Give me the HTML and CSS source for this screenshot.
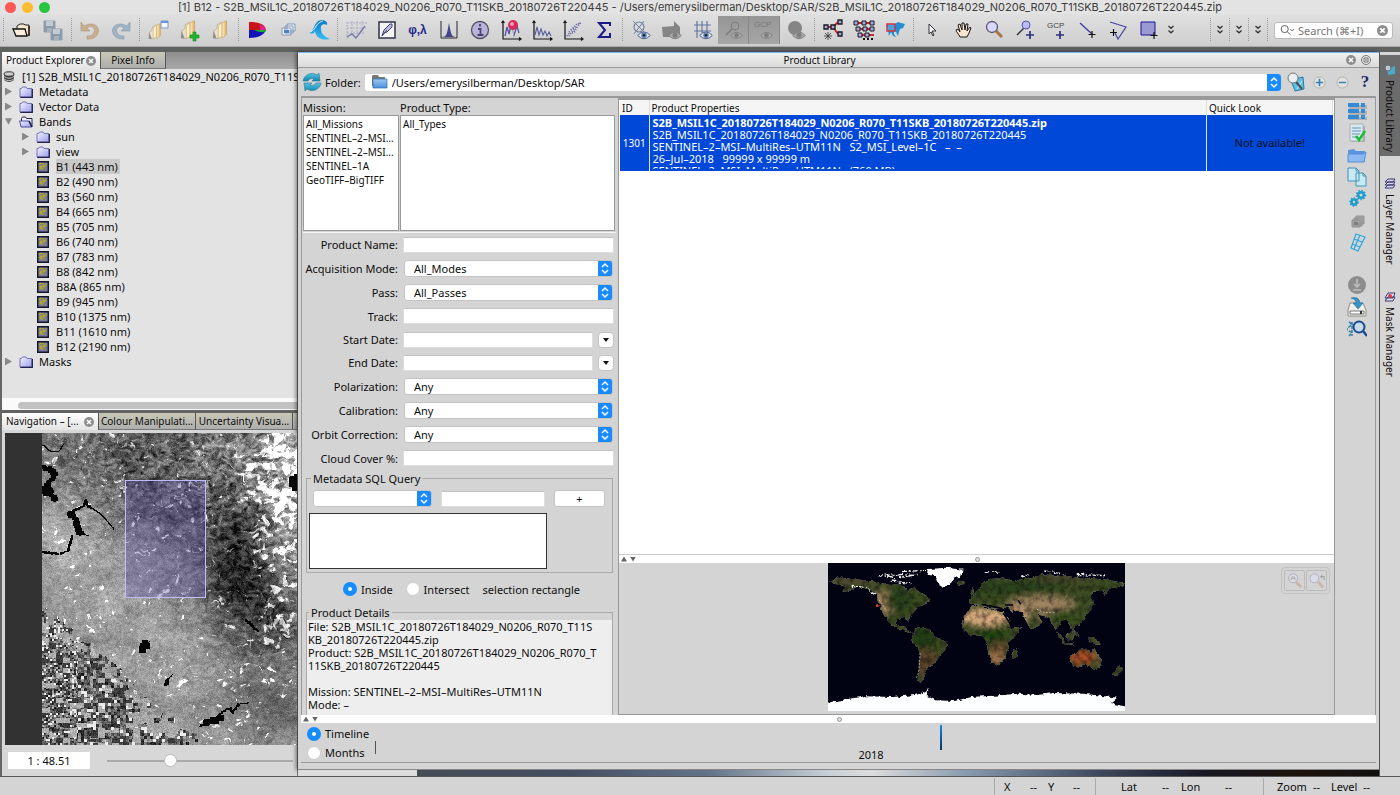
FILE: index.html
```html
<!DOCTYPE html>
<html lang="en">
<head>
<meta charset="utf-8">
<title>[1] B12 - S2B_MSIL1C_20180726T184029_N0206_R070_T11SKB_20180726T220445</title>
<link rel="stylesheet" href="styles.css">
</head>
<body>
<svg class="sprite" aria-hidden="true">
  <defs>
    <linearGradient id="g-folder" x1="0" y1="0" x2="1" y2="1"><stop offset="0" stop-color="#f4f4ff"/><stop offset="1" stop-color="#9c9ce8"/></linearGradient>
    <linearGradient id="g-manila" x1="0" y1="0" x2="1" y2="0"><stop offset="0" stop-color="#fff3d0"/><stop offset="1" stop-color="#dba95a"/></linearGradient>
    <linearGradient id="g-wave" x1="0" y1="0" x2="0" y2="1"><stop offset="0" stop-color="#0a78c8"/><stop offset="1" stop-color="#35bdf5"/></linearGradient>
    <linearGradient id="g-teal" x1="0" y1="0" x2="0" y2="1"><stop offset="0" stop-color="#54c4e4"/><stop offset="1" stop-color="#1487b0"/></linearGradient>
    <linearGradient id="g-blue" x1="0" y1="0" x2="0" y2="1"><stop offset="0" stop-color="#9cc9f5"/><stop offset="1" stop-color="#4a8ed8"/></linearGradient>
  </defs>
  <symbol id="folder" viewBox="0 0 14 12"><path d="M1 2.500h1.500l1-1.500h3.500l1 1.500h5v8.500h-12z" fill="url(#g-folder)" stroke="#7474b8"/><path d="M13.300 3v8.300h-12" fill="none" stroke="#22224c" stroke-width="1.300"/></symbol>
  <symbol id="folder-open" viewBox="0 0 14 12"><path d="M2.500 9v-6.500l1-1.500h3l1 1.500h5.500v8z" fill="#e9e9ff" stroke="#22224c"/><path d="M.6 5h9.500l2.600 6h-10.600z" fill="url(#g-folder)" stroke="#4d4d9a"/><path d="M10 5l3 6" stroke="#1a1a44" stroke-width="1.500"/></symbol>
  <symbol id="band" viewBox="0 0 12 12"><path d="M.7.7h10.600v10.600h-10.600z" fill="#77779e" stroke="#15152a" stroke-width="1.400"/><path d="M2 4l1-2 3 1 1-1M3 5h2v3H3zM6 4h2v2H6zM9 2v3M5 9l2-2M8 8l1 1" fill="#bcb428" stroke="#aaa42c"/></symbol>
  <symbol id="eye" viewBox="0 0 14 9"><path d="M.7 4.500Q7-2.500 13.300 4.500 7 11 .7 4.500z" fill="#e8edf6" stroke="#49618b"/><circle cx="7" cy="4.300" r="2.800" fill="#6785b2"/><circle cx="7" cy="4.300" r="1.300" fill="#16243f"/></symbol>
  <symbol id="eye-off" viewBox="0 0 14 9"><path d="M.7 4.500Q7-2.500 13.300 4.500 7 11 .7 4.500z" fill="#a9a9a9" stroke="#808080"/><circle cx="7" cy="4.300" r="2.500" fill="#7e7e7e"/></symbol>
  <symbol id="close" viewBox="0 0 10 10"><circle cx="5" cy="5" r="5" fill="#8d8d8d"/><path d="M3 3l4 4M7 3l-4 4" stroke="#fff" stroke-width="1.500"/></symbol>
  <symbol id="chev" viewBox="0 0 8 10"><path d="M1.500 1l2.500 2.300L6.500 1M1.500 5.500L4 7.800l2.500-2.300" fill="none" stroke="#333" stroke-width="1.300"/></symbol>
  <symbol id="folders" viewBox="0 0 24 24"><path d="M3 21v-8l3-2 1-5 4-2 2 1v13l-5 3z" fill="#e9dfca" stroke="#a2967e" stroke-width=".6"/><path d="M8 7l4-3v15l-4 2z" fill="#fff0c9" stroke="#c2a268" stroke-width=".6"/><path d="M12 4l5-2v15l-5 4z" fill="url(#g-manila)" stroke="#c6a15c" stroke-width=".7"/><path d="M2 21l1-8 3 8z" fill="#8d8d8d"/></symbol>
  <symbol id="axes" viewBox="0 0 24 24"><path d="M4 3v18h18M2.500 5L4 3l1.500 2M20 19.500l2 1.500-2 1.500" fill="none" stroke="#151515" stroke-width="1.200"/></symbol>
</svg>

<header class="titlebar">
  <span class="lights"><i class="red"></i><i class="yellow"></i><i class="green"></i></span>
  <span class="title">[1] B12 - S2B_MSIL1C_20180726T184029_N0206_R070_T11SKB_20180726T220445 - /Users/emerysilberman/Desktop/SAR/S2B_MSIL1C_20180726T184029_N0206_R070_T11SKB_20180726T220445.zip</span>
</header>

<nav class="toolbar" aria-label="Main toolbar">
  <i class="sep"></i>
  <button class="tool" aria-label="Open product"><svg viewBox="0 0 24 24"><path d="M7 17V8l3-2h4l1 1h4v10z" fill="#f6e6cf" stroke="#222"/><path d="M3 11h12l2 7H6z" fill="#fbeedb" stroke="#111" stroke-width="1.300"/><path d="M19 8v10" stroke="#3b2410" stroke-width="1.600"/></svg></button>
  <button class="tool" aria-label="Save"><svg viewBox="0 0 24 24"><g fill="#899aa9" stroke="#8fa0ae"><path d="M3 3h11v11H3zM10 11h11v11H10z"/></g><path d="M5 3h7v5H5zM12 11h7v5h-7z" fill="#c3cad0"/><path d="M6 10h5v4H6zM13 18h5v4h-5z" fill="#a9b2ba"/></svg></button>
  <i class="sep"></i>
  <button class="tool" aria-label="Undo"><svg viewBox="0 0 24 24"><path d="M3 4v9h9l-3-3c5-4 10 1 6 6-1 2-4 2-6 2v3c14 1 15-15 4-15-3 0-5 1-7 2z" fill="#c9ad8e" stroke="#ad967d" stroke-width=".6"/></svg></button>
  <button class="tool" aria-label="Redo"><svg viewBox="0 0 24 24"><path d="M21 4v9h-9l3-3c-5-4-10 1-6 6 1 2 4 2 6 2v3C1 22 0 6 11 6c3 0 5 1 7 2z" fill="#9eb4c3" stroke="#8399a8" stroke-width=".6"/></svg></button>
  <i class="sep"></i>
  <button class="tool" aria-label="Open workspace"><svg viewBox="0 0 24 24"><use href="#folders" x="1" y="4" width="19" height="19"/><path d="M15 3h7v7h-7z" fill="#f5f8fd" stroke="#7b9ac8"/><path d="M15 4h7" stroke="#6794d7" stroke-width="2"/></svg></button>
  <button class="tool" aria-label="Add product"><svg viewBox="0 0 24 24"><use href="#folders" x="2" y="1" width="22" height="22"/><path d="M16 14h3v3h3v3h-3v3h-3v-3h-3v-3h3z" fill="#20b52c" stroke="#118b1c" stroke-width=".6"/></svg></button>
  <button class="tool" aria-label="Products"><svg viewBox="0 0 24 24"><use href="#folders" x="3" y="1" width="22" height="22"/></svg></button>
  <i class="sep"></i>
  <button class="tool" aria-label="RGB image"><svg viewBox="0 0 24 24"><path d="M4 4c10 0 16 2 17 8H4z" fill="#c9131b"/><path d="M4 12h17c-2 5-8 8-17 8z" fill="#1212b8"/><path d="M9 12h12c-1 3-5 3-12 0z" fill="#13ac2d"/><path d="M15 6q5 2 6 6h-6z" fill="#e1208d"/></svg></button>
  <button class="tool" aria-label="Image layers"><svg viewBox="0 0 24 24"><g fill="#e9eff7" stroke="#6f8cad" stroke-width=".8"><path d="M11 6h8v7h-8zM9 8h8v7H9zM6 10h9v7H6z"/></g><path d="M8 12h5v3H8z" fill="#4e83c0"/></svg></button>
  <button class="tool" aria-label="Wave"><svg viewBox="0 0 24 24"><path d="M2 15c5-1 5-12 12-13 4 0 7 2 6 5-3-2-7 0-6 4 0 5 4 8 9 10-8 2-14-1-15-8-1 3-3 3-6 2z" fill="url(#g-wave)"/><path d="M3 14c6-2 6-10 13-11" stroke="#e3f7ff" fill="none"/></svg></button>
  <i class="sep"></i>
  <button class="tool" aria-label="Spectrum"><svg viewBox="0 0 24 24"><path d="M3 4v17M3 5h20M3 10h19M8 3v15M13 3v13M18 3v13M3 15h17" stroke="#acacc7" stroke-dasharray="2 1"/><path d="M3 19l5-3 4 4 9-12" fill="none" stroke="#7878a9" stroke-width="1.400"/></svg></button>
  <button class="tool" aria-label="Draw"><svg viewBox="0 0 24 24"><path d="M4 4h16v16H4z" fill="#f4f4f4" stroke="#2f3348" stroke-width="1.500"/><path d="M7 18l2-6 6-6h2v3l-5 5-3 1z" fill="#b8bbdf" stroke="#43456f"/><path d="M7 18l5-6" stroke="#43456f"/></svg></button>
  <button class="tool text" aria-label="Coordinates">φ,λ</button>
  <button class="tool" aria-label="Histogram"><svg viewBox="0 0 24 24"><path d="M4 3v17h16V3" stroke="#292929" fill="none"/><path d="M5 19c5 0 5-4 7-14 2 10 2 14 7 14z" fill="#454588"/></svg></button>
  <button class="tool" aria-label="Information"><svg viewBox="0 0 24 24"><circle cx="12" cy="12" r="8.500" fill="#b9b3dc" stroke="#54515e" stroke-width="1.300"/><path d="M10 11h2.500v6m-3 0h6M12 6v2.500" fill="none" stroke="#47436b" stroke-width="1.800"/></svg></button>
  <button class="tool" aria-label="Pin statistics"><svg viewBox="0 0 24 24"><use href="#axes" width="24" height="24"/><path d="M6 18l2-9 2 7 2-9 3 10 3-9 2 7" fill="none" stroke="#5454a1" stroke-width="1.300"/><path d="M14 11v6" stroke="#eee"/><circle cx="14" cy="7" r="5" fill="#d72b5b"/><circle cx="13" cy="6" r="2" fill="#f59bb5"/></svg></button>
  <button class="tool" aria-label="Profile plot"><svg viewBox="0 0 24 24"><use href="#axes" width="24" height="24"/><path d="M5 17l2-8 2 8 2-6 2 6 2-4 2 5 2-4 2 4" fill="none" stroke="#5b5ba0" stroke-width="1.100"/></svg></button>
  <button class="tool" aria-label="Scatter plot"><svg viewBox="0 0 24 24"><use href="#axes" width="24" height="24"/><path d="M6 18l3-4M8 18l6-8M10 12l6-4M13 14l6-9M11 15l4-2M17 6l3-1M8 14l8-8" stroke="#6868a9" stroke-width="1.800" stroke-dasharray="1 1.500"/></svg></button>
  <button class="tool" aria-label="Statistics"><svg viewBox="0 0 24 24"><path d="M18 8V5H7l6 7-6 7h11v-4" fill="none" stroke="#191988" stroke-width="2"/></svg></button>
  <i class="sep"></i>
  <button class="tool" aria-label="No data overlay"><svg viewBox="0 0 24 24"><circle cx="10" cy="9" r="5" fill="none" stroke="#7080a2" stroke-width="1.200"/><path d="M4 3l14 14M15 3L5 16" stroke="#7080a2"/><use href="#eye" x="8" y="13" width="14" height="9"/></svg></button>
  <button class="tool" aria-label="Shape overlay"><svg viewBox="0 0 24 24"><path d="M2 9l12-1V3l6 6v10H3z" fill="#858585"/><use href="#eye-off" x="8" y="13" width="14" height="9"/></svg></button>
  <button class="tool" aria-label="Graticule overlay"><svg viewBox="0 0 24 24"><path d="M3 7h17M3 13h17M6 3v17M11 3v12M16 3v12" stroke="#6475a2" stroke-width="1.200"/><use href="#eye" x="8" y="13" width="14" height="9"/></svg></button>
  <button class="tool off" aria-label="Pin overlay"><svg viewBox="0 0 24 24"><circle cx="14" cy="8" r="4" fill="none" stroke="#7b7b7b"/><path d="M11 11l-6 6" stroke="#777" stroke-width="1.400"/><use href="#eye-off" x="9" y="13" width="13" height="9"/></svg></button>
  <button class="tool off" aria-label="GCP overlay"><svg viewBox="0 0 24 24"><text x="2" y="9" class="gcp dim">GCP</text><use href="#eye-off" x="8" y="13" width="13" height="9"/></svg></button>
  <button class="tool" aria-label="Mask overlay"><svg viewBox="0 0 24 24"><circle cx="11" cy="10" r="7" fill="#858585"/><use href="#eye-off" x="8" y="13" width="14" height="9"/></svg></button>
  <i class="sep"></i>
  <button class="tool" aria-label="Graph builder"><svg viewBox="0 0 24 24"><path d="M5 9h7l5-5M12 9l5 7" fill="none" stroke="#cf2a2d" stroke-width="2"/><g fill="#aaaad8" stroke="#181820" stroke-width="1.300"><path d="M3 7h4v4H3zM10 7h4v4h-4zM17 2h4v4h-4zM17 14h4v4h-4z"/></g><path d="M7 14v8M3 18h8M4 15l6 6M10 15l-6 6" stroke="#333" stroke-width=".8"/></svg></button>
  <button class="tool" aria-label="Batch processing"><svg viewBox="0 0 24 24"><path d="M4 5h17M5 11h17M7 17h15" stroke="#bd2d35" stroke-width="2"/><g fill="#aaaad8" stroke="#181820"><path d="M2 3h4v4H2zM10 3h4v4h-4zM18 3h4v4h-4zM4 9h4v4H4zM11 9h4v4h-4zM18 9h4v4h-4zM6 15h4v4H6zM13 15h4v4h-4z"/></g><path d="M11 21h2M15 21h2M19 21h2" stroke="#111" stroke-width="2"/></svg></button>
  <button class="tool" aria-label="World view"><svg viewBox="0 0 24 24"><path d="M3 7l9-1 3-2 3 1 4 1-2 4-3 1-1 3-1 4-2-4-2-1v3l2 3-3-1-2-4-2 4-1-6z" fill="#218fd6"/><path d="M4 6h8v7H4z" fill="#88bee5" fill-opacity=".4" stroke="#d5303b" stroke-width="1.400"/></svg></button>
  <i class="sep"></i>
  <button class="tool" aria-label="Select"><svg viewBox="0 0 24 24"><path d="M9 6l7 7h-4l2 4-1 1-2-4-2 2z" fill="#f5f5ff" stroke="#333"/></svg></button>
  <button class="tool" aria-label="Pan"><svg viewBox="0 0 24 24"><path d="M9 19c-1-3-4-5-4-7l2-1 2 3-2-7 2-1 2 6V5h2l1 7 1-6h2l-1 7 3-4 1 1-2 5-2 4z" fill="#f9e6cc" stroke="#181818"/></svg></button>
  <button class="tool" aria-label="Zoom"><svg viewBox="0 0 24 24"><path d="M14 13l6 6" stroke="#a57748" stroke-width="3"/><circle cx="10" cy="9" r="5.500" fill="#d9d9ff" stroke="#595973" stroke-width="1.300"/></svg></button>
  <button class="tool" aria-label="Pin placing"><svg viewBox="0 0 24 24"><path d="M11 10l-7 7" stroke="#333" stroke-width="1.400"/><circle cx="13" cy="7" r="4" fill="#bbbcff" stroke="#5555a2"/><path d="M17 13v8M13 17h8" stroke="#2e2e7e" stroke-width="1.700"/></svg></button>
  <button class="tool" aria-label="GCP placing"><svg viewBox="0 0 24 24"><text x="3" y="10" class="gcp">GCP</text><path d="M16 13v8M12 17h8" stroke="#2e2e7e" stroke-width="1.700"/></svg></button>
  <button class="tool" aria-label="Line drawing"><svg viewBox="0 0 24 24"><path d="M5 5l12 11" stroke="#3535a3" stroke-width="1.200"/><path d="M17 13v7M13.500 16.500h7" stroke="#111" stroke-width="1.200"/></svg></button>
  <button class="tool" aria-label="Polygon drawing"><svg viewBox="0 0 24 24"><path d="M4 4l16 5-8 12-3-6" fill="none" stroke="#4545a4" stroke-width="1.200"/><path d="M7.500 11v7M4 14.500h7" stroke="#111" stroke-width="1.200"/></svg></button>
  <button class="tool" aria-label="Rectangle drawing"><svg viewBox="0 0 24 24"><path d="M4 4h14v13H4z" fill="#9c98d1" stroke="#17179b"/><path d="M17 14v7M13.500 17.500h7" stroke="#111" stroke-width="1.200"/></svg></button>
  <button class="more" aria-label="More tools"><svg viewBox="0 0 8 10"><use href="#chev"/></svg></button>
  <span class="overflow">
    <i class="sep"></i><button class="more" aria-label="More"><svg viewBox="0 0 8 10"><use href="#chev"/></svg></button>
    <i class="sep"></i><button class="more" aria-label="More"><svg viewBox="0 0 8 10"><use href="#chev"/></svg></button>
    <i class="sep"></i><button class="more" aria-label="More"><svg viewBox="0 0 8 10"><use href="#chev"/></svg></button>
    <i class="sep"></i>
  </span>
  <div class="search">
    <svg class="search-icon" viewBox="0 0 16 12"><circle cx="5" cy="5" r="3.800" fill="none" stroke="#555"/><path d="M8 8l3 3M11 5l2 2 2-2" fill="none" stroke="#555"/></svg>
    <input type="text" aria-label="Search" placeholder="Search (⌘+I)">
    <button aria-label="Clear search"><svg viewBox="0 0 10 10"><use href="#close"/></svg></button>
  </div>
</nav>

<main class="workspace">
  <aside class="dock">
    <section class="explorer">
      <div class="tabs" role="tablist">
        <button class="tab on" role="tab">Product Explorer<svg viewBox="0 0 10 10"><use href="#close"/></svg></button>
        <button class="tab wide" role="tab">Pixel Info</button>
      </div>
      <ul class="tree">
        <li class="row root"><svg class="db" viewBox="0 0 12 12"><path d="M1 3v6q5 4 10 0V3" fill="#444"/><ellipse cx="6" cy="3" rx="5" ry="2.200" fill="#ccc" stroke="#333"/><path d="M1 5.500q5 3.500 10 0M1 8q5 3.500 10 0" stroke="#bbb" fill="none"/></svg><span>[1] S2B_MSIL1C_20180726T184029_N0206_R070_T11SKB_20180726T220445</span></li>
        <li class="row"><i class="tri"></i><svg class="fold"><use href="#folder"/></svg><span>Metadata</span></li>
        <li class="row"><i class="tri"></i><svg class="fold"><use href="#folder"/></svg><span>Vector Data</span></li>
        <li class="row"><i class="tri down"></i><svg class="fold"><use href="#folder-open"/></svg><span>Bands</span></li>
        <li class="row sub"><i class="tri"></i><svg class="fold"><use href="#folder"/></svg><span>sun</span></li>
        <li class="row sub"><i class="tri"></i><svg class="fold"><use href="#folder"/></svg><span>view</span></li>
        <li class="row leaf"><svg class="fold"><use href="#band"/></svg><span class="picked">B1 (443 nm)</span></li>
        <li class="row leaf"><svg class="fold"><use href="#band"/></svg><span>B2 (490 nm)</span></li>
        <li class="row leaf"><svg class="fold"><use href="#band"/></svg><span>B3 (560 nm)</span></li>
        <li class="row leaf"><svg class="fold"><use href="#band"/></svg><span>B4 (665 nm)</span></li>
        <li class="row leaf"><svg class="fold"><use href="#band"/></svg><span>B5 (705 nm)</span></li>
        <li class="row leaf"><svg class="fold"><use href="#band"/></svg><span>B6 (740 nm)</span></li>
        <li class="row leaf"><svg class="fold"><use href="#band"/></svg><span>B7 (783 nm)</span></li>
        <li class="row leaf"><svg class="fold"><use href="#band"/></svg><span>B8 (842 nm)</span></li>
        <li class="row leaf"><svg class="fold"><use href="#band"/></svg><span>B8A (865 nm)</span></li>
        <li class="row leaf"><svg class="fold"><use href="#band"/></svg><span>B9 (945 nm)</span></li>
        <li class="row leaf"><svg class="fold"><use href="#band"/></svg><span>B10 (1375 nm)</span></li>
        <li class="row leaf"><svg class="fold"><use href="#band"/></svg><span>B11 (1610 nm)</span></li>
        <li class="row leaf"><svg class="fold"><use href="#band"/></svg><span>B12 (2190 nm)</span></li>
        <li class="row"><i class="tri"></i><svg class="fold"><use href="#folder"/></svg><span>Masks</span></li>
      </ul>
      <div class="hscroll"><i></i></div>
    </section>
    <section class="navigation">
      <div class="tabs low" role="tablist">
        <button class="tab on" role="tab">Navigation – [...<svg viewBox="0 0 10 10"><use href="#close"/></svg></button>
        <button class="tab" role="tab">Colour Manipulati...</button>
        <button class="tab" role="tab">Uncertainty Visua...</button>
        <i class="tab stub"></i>
      </div>
      <div class="scene"><canvas id="terrain" width="255" height="312"></canvas><i class="viewport"></i></div>
      <div class="zoombar">
        <input class="scale" type="text" aria-label="Scale" value="1 : 48.51">
        <input class="slider" type="range" aria-label="Zoom" min="0" max="100" value="33">
      </div>
    </section>
  </aside>

  <div class="center">
  <section class="library">
    <header class="lib-title"><span>Product Library</span>
      <button aria-label="Close"><svg viewBox="0 0 10 10"><use href="#close"/></svg></button>
      <button aria-label="Dock"><svg viewBox="0 0 10 10"><circle cx="5" cy="5" r="4.500" fill="#e5e5e5" stroke="#777"/><path d="M3 3h4v4H3zM5 4v2" fill="none" stroke="#777"/></svg></button>
    </header>
    <div class="folderbar">
      <button class="refresh" aria-label="Refresh"><svg viewBox="0 0 20 20"><path d="M1 9a9 9 0 0 1 14-6l2-2 1 8h-8l2-2a4.500 4.500 0 0 0-6 2z" fill="url(#g-teal)" stroke="#2b7892" stroke-width=".6"/><path d="M19 11a9 9 0 0 1-14 6l-2 2-1-8h8l-2 2a4.500 4.500 0 0 0 6-2z" fill="url(#g-teal)" stroke="#2b7892" stroke-width=".6"/></svg></button>
      <label for="folder-path">Folder:</label>
      <div class="path"><svg viewBox="0 0 18 16"><path d="M2 2l1-1h5l1 2h6v9H2z" fill="#777"/><path d="M3 5h14v9H3z" fill="url(#g-blue)" stroke="#2d6fae" stroke-width=".7"/></svg>
        <select id="folder-path" class="combo"><option>/Users/emerysilberman/Desktop/SAR</option></select></div>
      <button aria-label="Scan" class="big"><svg viewBox="0 0 20 20"><path d="M5 8l12-3 1 12-9 2z" fill="#62bfe2" stroke="#237dac"/><path d="M11 17l5-8" stroke="#d6f3ff"/><path d="M10 10l6 7" stroke="#42505a" stroke-width="2"/><circle cx="7" cy="6" r="5" fill="#e9f0f3" stroke="#777"/></svg></button>
      <button aria-label="Add folder"><svg viewBox="0 0 14 14"><circle cx="7" cy="7" r="6" fill="#e5e5e2" stroke="#b1aea8"/><path d="M7 3v8M3 7h8" stroke="#3283b5" stroke-width="1.800"/></svg></button>
      <button aria-label="Remove folder"><svg viewBox="0 0 14 14"><circle cx="7" cy="7" r="6" fill="#e1e0dd" stroke="#b1aea8"/><path d="M3 7h8" stroke="#3e86b2" stroke-width="1.600"/></svg></button>
      <button class="help" aria-label="Help">?</button>
    </div>

    <div class="lib-main">
      <form class="query">
        <div class="lists">
          <div class="list"><label for="mission">Mission:</label>
            <select id="mission" size="6"><option>All_Missions</option><option>SENTINEL–2–MSI...</option><option>SENTINEL–2–MSI...</option><option>SENTINEL–1A</option><option>GeoTIFF–BigTIFF</option></select></div>
          <div class="list"><label for="ptype">Product Type:</label>
            <select id="ptype" size="6"><option>All_Types</option></select></div>
        </div>
        <div class="fields">
          <div class="field tight"><label for="pname">Product Name:</label><input id="pname" type="text"></div>
          <div class="field"><label for="mode">Acquisition Mode:</label><select id="mode" class="combo"><option>All_Modes</option></select></div>
          <div class="field"><label for="pass">Pass:</label><select id="pass" class="combo"><option>All_Passes</option></select></div>
          <div class="field"><label for="track">Track:</label><input id="track" type="text"></div>
          <div class="field tight"><label for="start">Start Date:</label><input id="start" type="text"><button type="button" class="pick" aria-label="Pick start date"></button></div>
          <div class="field tight"><label for="end">End Date:</label><input id="end" type="text"><button type="button" class="pick" aria-label="Pick end date"></button></div>
          <div class="field"><label for="pol">Polarization:</label><select id="pol" class="combo"><option>Any</option></select></div>
          <div class="field"><label for="cal">Calibration:</label><select id="cal" class="combo"><option>Any</option></select></div>
          <div class="field"><label for="orbit">Orbit Correction:</label><select id="orbit" class="combo"><option>Any</option></select></div>
          <div class="field"><label for="cloud">Cloud Cover %:</label><input id="cloud" type="text"></div>
        </div>
        <fieldset class="box sql"><legend>Metadata SQL Query</legend>
          <div class="sqlrow"><select class="combo" aria-label="Metadata field"><option></option></select><input type="text" aria-label="Value"><button type="button">+</button></div>
          <textarea aria-label="SQL query"></textarea>
        </fieldset>
        <div class="overlap">
          <label><input type="radio" name="overlap" checked>Inside</label>
          <label><input type="radio" name="overlap">Intersect</label>
          <span>selection rectangle</span>
        </div>
        <fieldset class="box details"><legend>Product Details</legend>
          <div class="info">File: S2B_MSIL1C_20180726T184029_N0206_R070_T11S<br>KB_20180726T220445.zip<br>Product: S2B_MSIL1C_20180726T184029_N0206_R070_T<br>11SKB_20180726T220445<br><br>Mission: SENTINEL–2–MSI–MultiRes–UTM11N<br>Mode: –</div>
        </fieldset>
      </form>

      <div class="results">
        <div class="tablewrap">
          <table>
            <thead><tr><th class="c-id">ID</th><th>Product Properties</th><th class="c-look">Quick Look</th></tr></thead>
            <tbody><tr><td class="c-id">1301</td><td class="props"><div><b>S2B_MSIL1C_20180726T184029_N0206_R070_T11SKB_20180726T220445.zip</b><br>S2B_MSIL1C_20180726T184029_N0206_R070_T11SKB_20180726T220445<br>SENTINEL–2–MSI–MultiRes–UTM11N &nbsp; S2_MSI_Level–1C &nbsp; – &nbsp;–<br>26–Jul–2018 &nbsp; 99999 x 99999 m<br>SENTINEL–2–MSI–MultiRes–UTM11N &nbsp; (760 MB)</div></td><td class="c-look">Not available!</td></tr></tbody>
          </table>
        </div>
        <div class="split"><i class="up"></i><i class="dn"></i><b></b></div>
        <div class="mappane">
          <svg class="map" viewBox="39 66 891 444" role="img" aria-label="World map">
            <defs>
              <filter id="coast" x="0" y="0" width="100%" height="100%" color-interpolation-filters="sRGB"><feTurbulence type="fractalNoise" baseFrequency=".07" numOctaves="3" seed="4" result="n"/><feDisplacementMap in="SourceGraphic" in2="n" scale="14" xChannelSelector="R" yChannelSelector="G" result="d"/><feTurbulence type="fractalNoise" baseFrequency=".06" numOctaves="4" seed="9"/><feColorMatrix values="1 0 0 0 .38  1 0 0 0 .38  1 0 0 0 .38  0 0 0 0 1" result="t"/><feBlend in="d" in2="t" mode="multiply" result="m"/><feComposite in="m" in2="d" operator="in"/></filter>
              <filter id="rough" x="0" y="0" width="100%" height="100%"><feTurbulence type="fractalNoise" baseFrequency=".08" numOctaves="3" seed="2" result="n"/><feDisplacementMap in="SourceGraphic" in2="n" scale="14" xChannelSelector="R" yChannelSelector="G"/></filter>
              <filter id="soft" x="-30%" y="-30%" width="160%" height="160%"><feGaussianBlur stdDeviation="9"/></filter>
              <clipPath id="land">
                <path d="M42 122l35-12 45 5 60 8 40 8 42 0 12 20 20-14 32 24 18 18-20 12-22 10-16 18-10 26-8-14-20 2-8 14 14 8 22 4 8 16 8 0-6 4-18-8-25-10-18-10-28-48-10-22-4-24-30-14-28-6-30 14-18 2 14-14z"/>
                <path d="M303 262l18-4 28 12 12 18 36 14-4 26-18 18-18 20-12 8-18 34-8 18-12-6 6-40 4-38-8-20-16-18-4-20 14-20z"/>
                <path d="M467 198l32-6 15 12 27 4 28 8 14 24 10 22 24-3-10 18-25 25 0 23-12 23-8 16-18 8-13-6-14-40 0-22-16-20-38-2-20-20 0-24 12-22z"/>
                <path d="M605 322l4 10-6 20-12-4 2-18z"/>
                <path d="M462 186l2-16 14-8 12-16 10-18 22-14 38-2 36 8 40-8 50-12 60 6 130 10 54 10-14 10-34 8-10 18-8-12-30 2-6 18 2 18-8 6-2 18-14 20-16 24-12-8 0 14 12 24-8-2-14-30-12-18-16 2-12 24-8 4-14-32-16-8-24-6 16 20-14 16-22 8-16-30-7-20-20-6-10-4 4 12-10-10-10-8-8 2-12 2-10 4z"/>
                <path d="M766 344l18-6 12-14 16-4 8 8 10 4 8-12 8 18 14 20-6 22-16 4-12-10-14-4-22 6-16-2z"/>
                <path d="M720 270l18 12 12 20 28 4-2 6-30-4zM754 286l18-16 8 12-8 16-16 0zM820 288l24 8 16 16-22-2-14-8zM774 230l8 12-2 20-6-12zM834 174l4 16-18 18-8-2 18-16zM912 376l10 8-20 22-8-6zM467 144l8-4 6 18-14 6zM426 122l22 2-8 8-12-2z"/>
              </clipPath>
            </defs>
            <rect x="39" y="66" width="891" height="444" fill="#010212"/>
            <g filter="url(#coast)">
              <g clip-path="url(#land)"><rect x="39" y="66" width="891" height="444" fill="#3d4c22"/>
                <g filter="url(#soft)"><ellipse cx="205" cy="185" rx="35" ry="42" fill="#947b52"/><ellipse cx="110" cy="120" rx="85" ry="14" fill="#4f4a30"/><ellipse cx="255" cy="175" rx="40" ry="38" fill="#2c431b"/><ellipse cx="325" cy="290" rx="34" ry="34" fill="#223d12"/><ellipse cx="330" cy="365" rx="40" ry="42" fill="#5c442c"/><ellipse cx="510" cy="228" rx="83" ry="27" fill="#dcae80"/><ellipse cx="605" cy="225" rx="40" ry="28" fill="#cda27a"/><ellipse cx="535" cy="276" rx="42" ry="19" fill="#1f4410"/><ellipse cx="555" cy="317" rx="30" ry="15" fill="#5c442a"/><ellipse cx="545" cy="350" rx="30" ry="25" fill="#9b6e47"/><ellipse cx="680" cy="188" rx="105" ry="25" fill="#a18562"/><ellipse cx="600" cy="140" rx="140" ry="18" fill="#2b431c"/><ellipse cx="750" cy="110" rx="100" ry="10" fill="#4b452d"/><ellipse cx="748" cy="224" rx="35" ry="20" fill="#35501f"/><ellipse cx="685" cy="235" rx="15" ry="24" fill="#8d7450"/><ellipse cx="802" cy="349" rx="42" ry="24" fill="#a84c28"/><ellipse cx="852" cy="348" rx="8" ry="28" fill="#7d7048"/></g>
              </g>
            </g>
            <g filter="url(#rough)">
              <path d="M338 84l60-4 46 6-10 20-20 8-28 26-14-8-10-26-26-6z" fill="#fff"/>
              <path d="M30 486l69-12 50-8 85 2 65-6 22-6 20-12-6 20 26 14 60 2 45-12 70-4 75-6 55 4 50-6 90 2 100 12-18 16 50 12v50H30z" fill="#fcfeff"/>
            </g>
            <g fill="none" stroke="#e9eee8" stroke-width="4" stroke-dasharray="16 5 7 4" filter="url(#rough)"><path d="M185 104l40 2 24 14M208 98l55 10 45-8M230 120l60 8M260 92l70-4M250 100l60 4M110 136l40 2 34 24M510 92l42 2M615 110l30-10M688 90l65 10M780 100l90 4"/></g>
            <g fill="none" stroke="#e6d9cc" stroke-width="2" stroke-dasharray="6 4"><path d="M665 204l20 10 38 0M315 336l-4 58-8 20M192 176l22 32"/></g>
            <path d="M565 216l20 32 6 16M610 178l7 12M570 192l24 0M500 190l60 12M605 216l20 8" fill="none" stroke="#010212" stroke-width="5"/>
            <circle cx="187" cy="194" r="4" fill="#f04424"/>
          </svg>
          <div class="maptools">
            <button aria-label="Zoom all"><svg viewBox="0 0 20 20"><path d="M11 11l6 6" stroke="#c9b4aa" stroke-width="3"/><circle cx="8" cy="7" r="5" fill="#dcdce5" stroke="#aaaab5"/><path d="M6 9V6l2-1 2 1v3M6 7h4" stroke="#aaa" fill="none"/></svg></button>
            <button aria-label="Zoom back"><svg viewBox="0 0 20 20"><path d="M11 11l6 6" stroke="#c9b4aa" stroke-width="3"/><circle cx="7" cy="7" r="5" fill="#dcdce8" stroke="#aaaab5"/><path d="M14 5h4v4M16 3l-2 2 2 2" stroke="#999" fill="none"/></svg></button>
          </div>
        </div>
      </div>

      <div class="actions">
        <button aria-label="Select all"><svg viewBox="0 0 20 20"><path d="M2 4h18v4H2zM2 10h18v4H2zM2 16h18v3H2z" fill="#8b8b8b" opacity=".5"/><path d="M1 2h11v4H1zM1 8h11v4H1zM1 14h11v4H1zM14 2h4v4h-4zM14 8h4v4h-4zM14 14h4v4h-4z" fill="#3689d6"/></svg></button>
        <button aria-label="Select ready"><svg viewBox="0 0 20 20"><path d="M4 3h14v16H4z" fill="#aaa"/><path d="M3 1h13v17H3z" fill="#dce8ef" stroke="#a9b1b5"/><path d="M5 5h9M5 8h9M5 11h8M5 14h6" stroke="#6995ba"/><path d="M9 13l3 4 6-9" stroke="#18bd35" fill="none" stroke-width="2.500"/></svg></button>
        <button aria-label="Open"><svg viewBox="0 0 20 20"><path d="M1 17V5l6-1 2 2h9v11z" fill="#5c95dc"/><path d="M1 9h15l3-2-2 10H1z" fill="#8bb9f2" stroke="#5590d9"/></svg></button>
        <button aria-label="Copy"><svg viewBox="0 0 20 20"><path d="M1 1h8l3 3v10H1zM9 6h7l3 3v10H9z" fill="#c7eaf5" stroke="#4191b5"/><path d="M9 1v3h3M16 6v3h3" fill="none" stroke="#4191b5"/></svg></button>
        <button aria-label="Batch"><svg viewBox="0 0 20 20"><g fill="none" stroke="#1e9dcc"><circle cx="7" cy="13" r="2.500" stroke-width="2.500"/><circle cx="14" cy="6" r="2.800" stroke-width="2.500"/><g stroke-width="1.500" stroke-dasharray="1.500 1.500"><circle cx="7" cy="13" r="4"/><circle cx="14" cy="6" r="4.500"/></g></g></svg></button>
        <button aria-label="Stack"><svg viewBox="0 0 20 20"><g fill="#a5a5a5" stroke="#929292"><path d="M9 5h8v8H9zM7 7h8v8H7zM5 9h8v7H5z"/></g><path d="M7 11h4v3H7z" fill="#7e7e7e"/></svg></button>
        <button aria-label="Mosaic"><svg viewBox="0 0 20 20"><path d="M9 1l9 3-7 14-7-3zM7 6l8 3M5 11l8 3M13 2L7 16" fill="none" stroke="#29a9df" stroke-width="1.200"/></svg></button>
        <i class="gap"></i>
        <button aria-label="Download"><svg viewBox="0 0 20 20"><circle cx="10" cy="10" r="9" fill="#8d8d8d"/><path d="M10 4v7M7 9l3 3 3-3M6 15h8" fill="none" stroke="#bdbdbd" stroke-width="1.600"/></svg></button>
        <button aria-label="Save to disk"><svg viewBox="0 0 20 20"><path d="M3 6h13l3 7v6H1v-6z" fill="#eeeeea" stroke="#8d8b84"/><path d="M3 14h14v3H3z" fill="#fff" stroke="#555" stroke-width=".8"/><path d="M13 14h2v3h-2z" fill="#333"/><path d="M4 1q8-2 9 5h3l-5 6-5-6h3q0-4-5-5z" fill="#3a91c3" stroke="#246e9e" stroke-width=".6"/></svg></button>
        <button aria-label="Find"><svg viewBox="0 0 20 20"><path d="M2 3q4 2 0 5t0 4 0 5M5 3v14" fill="none" stroke="#3280aa" stroke-width="1.500" stroke-dasharray="3 1"/><circle cx="12" cy="8" r="5.500" fill="#c9dceb" stroke="#1c4b91" stroke-width="2"/><path d="M16 12l4 5" stroke="#1c4b91" stroke-width="2.500"/></svg></button>
      </div>
    </div>

    <div class="split wide-split"><i class="up"></i><i class="dn"></i><b></b></div>
    <div class="timeline">
      <div class="ranges"><label><input type="radio" name="range" checked>Timeline</label><label><input type="radio" name="range">Months</label></div>
      <i class="tick"></i>
      <div class="chart"><i class="mark"></i><span>2018</span></div>
    </div>
  </section>
  <div class="desktop"></div>
  </div>

  <nav class="rail" aria-label="Tool windows">
    <button class="on"><svg viewBox="0 0 12 12"><path d="M3 5l8-3v8l-7 1z" fill="#49a9cb"/><circle cx="4" cy="4" r="3" fill="#bcc9cd" stroke="#667"/></svg>Product Library</button>
    <button><svg viewBox="0 0 12 12"><path d="M1 4l3-3h7l-2 3zM1 7l3-3h7L9 7zM1 10l3-3h7l-2 3z" fill="#d9d6f5" stroke="#39396d"/></svg>Layer Manager</button>
    <button><svg viewBox="0 0 12 12"><path d="M1 10l3-4h7l-2 4zM1 7l3-5h7L9 7z" fill="#e4e3fc" stroke="#39396d"/><circle cx="6" cy="5" r="2" fill="#d63845"/></svg>Mask Manager</button>
  </nav>
</main>

<footer class="status">
  <div class="s-xy"><span>X</span><span>--</span><span>Y</span><span>--</span></div>
  <div class="s-geo"><span>Lat</span><span>--</span><span>Lon</span><span>--</span></div>
  <div class="s-zoom"><span>Zoom</span><span>--</span><span>Level</span><span>--</span></div>
</footer>
<script src="terrain.js"></script>
</body>
</html>
```

FILE: styles.css
```css
* { box-sizing: border-box; }
body { margin: 0; min-height: 100vh; display: flex; flex-direction: column; background: #d4d4d4; color: #0c0c0c; font: 11px/15px "Noto Sans", "Open Sans", sans-serif; overflow: hidden; }
button, input, select, textarea { font: inherit; color: inherit; margin: 0; padding: 0; border: 0; background: none; border-radius: 0; outline: none; }
button { display: inline-flex; align-items: center; justify-content: center; flex: none; white-space: nowrap; }
svg { flex: none; }
i { font-style: normal; }
.sprite { position: absolute; width: 0; height: 0; }

/* Window title and toolbar */
.titlebar { display: flex; align-items: center; height: 14px; padding-right: 56px; background: #e3e3e3; color: #3c3c3c; font: 11px/14px Inter, Roboto, sans-serif; }
.lights { display: flex; gap: 6px; padding-left: 5px; width: 56px; }
.lights i { width: 11px; height: 11px; border-radius: 50%; }
.red { background: #fc5753; } .yellow { background: #fdbc2e; } .green { background: #29c440; }
.title { flex: 1; text-align: center; white-space: nowrap; overflow: hidden; }
.toolbar { display: flex; align-items: center; height: 33px; padding: 0 7px 0 0; background: linear-gradient(#e0e0e0, #cecece); border-bottom: 1px solid #aaa; }
.sep { flex: none; width: 6px; height: 24px; background: linear-gradient(90deg, transparent 3px, #999 3px, #999 4px, transparent 4px); -webkit-mask: repeating-linear-gradient(#000 0 1px, transparent 1px 2px); mask: repeating-linear-gradient(#000 0 1px, transparent 1px 2px); }
.tool { width: 31px; height: 28px; }
.tool svg { width: 24px; height: 24px; }
.tool.text { font: bold 12px/24px "Liberation Sans", sans-serif; color: #26268b; }
.tool.off { background: linear-gradient(#969696, #a6a6a6); border-right: 1px solid #888; }
.gcp { font: 8px "Liberation Sans", sans-serif; fill: #444; }
.gcp.dim { fill: #777; }
.more { width: 13px; height: 20px; }
.more svg { width: 8px; height: 10px; }
.overflow { display: flex; align-items: center; margin-left: auto; }
.search { display: flex; align-items: center; gap: 3px; width: 119px; height: 17px; padding: 0 4px 0 5px; background: #fff; border: 1px solid #bbb; border-radius: 3px; margin-left: 4px; }
.search-icon { width: 15px; height: 12px; }
.search input { flex: 1; min-width: 0; }
.search input::placeholder { color: #777; opacity: 1; }
.search svg:not(.search-icon) { width: 11px; height: 11px; }

/* Docked panels */
.workspace { flex: 1; display: flex; border-top: 5px solid #606260; border-bottom: 1px solid #555; }
.dock { flex: none; width: 298px; display: flex; flex-direction: column; border-left: 2px solid #666; border-right: 1px solid #777; overflow: hidden; }
.explorer { flex: 1; display: flex; flex-direction: column; background: #e3e3e3; }
.tabs { display: flex; height: 17px; background: linear-gradient(#8e8e8e, #a9a9a9); }
.tab { padding: 0 4px; font: 10px/15px "Noto Sans", sans-serif; background: linear-gradient(#c8c8b7, #aeaeae); border-right: 1px solid #555; border-bottom: 1px solid #777; }
.tab svg { width: 10px; height: 10px; margin-left: auto; }
.tab.on { width: 99px; background: linear-gradient(#fff, #e3e3e3); border-bottom: 0; }
.low .tab.on { width: 97px; }
.tab.wide { width: 65px; }
.tabs.low .tab:not(.on) { width: 97px; }
.tree { flex: 1; list-style: none; margin: 0; padding: 0; }
.row { display: flex; align-items: center; height: 15px; padding-left: 3px; white-space: nowrap; }
.row.root { padding-left: 1px; gap: 7px; }
.db { width: 12px; height: 12px; }
.tri { width: 7px; height: 8px; margin-right: 7px; background: #888; clip-path: polygon(0 0, 100% 50%, 0 100%); }
.tri.down { clip-path: polygon(0 10%, 100% 10%, 50% 90%); }
.fold { width: 14px; height: 12px; margin-right: 6px; }
.row.sub { padding-left: 20px; }
.row.leaf { padding-left: 34px; }
.row.sub span, .row.leaf span { padding: 0 2px 0 0; }
.picked { background: #c9c9c9; }
.hscroll { height: 12px; background: #fafafa; padding: 4px 0 0 16px; }
.hscroll i { display: block; height: 7px; background: #c1c1c1; border-radius: 4px 0 0 4px; }
.navigation { border-top: 3px solid #626262; background: #d7d7d7; }
.scene { position: relative; height: 312px; margin: 3px 0 0 3px; padding-left: 37px; background: #323232; }
.scene canvas { display: block; width: 100%; height: 100%; }
.viewport { position: absolute; left: 41%; top: 15%; width: 28%; height: 38%; border: 1px solid #c0bcff; background: rgba(91, 80, 160, .36); }
.zoombar { display: flex; align-items: center; gap: 17px; height: 31px; padding: 0 4px 0 6px; }
.scale { width: 82px; height: 17px; background: #fff; text-align: center; }
.slider { flex: 1; min-width: 0; appearance: none; height: 14px; background: linear-gradient(transparent 6px, #aaa 6px, #aaa 8px, transparent 8px); }
.slider::-webkit-slider-thumb { appearance: none; width: 13px; height: 13px; border-radius: 50%; background: #fff; border: 1px solid #bbb; }

/* Product library */
.center { flex: 1; min-width: 0; display: flex; flex-direction: column; }
.library { flex: 1; display: flex; flex-direction: column; background: #d4d4d4; border-top: 1px solid #77b5ec; border-bottom: 1px solid #888; box-shadow: -2px 0 4px rgba(0, 0, 0, .5); padding-bottom: 6px; }
.lib-title { display: flex; align-items: center; gap: 5px; height: 15px; padding-right: 8px; background: linear-gradient(#f0f0f0, #dadada); border-bottom: 1px solid #999; font: 10px/14px "Noto Sans", sans-serif; }
.lib-title span { flex: 1; text-align: center; }
.lib-title svg { width: 10px; height: 10px; }
.folderbar { display: flex; align-items: center; height: 30px; margin: 0 3px; padding: 0 1px 0 1px; gap: 3px; border-bottom: 2px solid #999; }
.refresh svg, .big svg { width: 20px; height: 20px; }
.folderbar > button { min-width: 20px; }
.folderbar button:not(.big):not(.refresh) svg { width: 13px; height: 13px; }
.folderbar .big { margin-left: 2px; }
.help { font: bold 17px/20px "Liberation Serif", serif; color: #25256c; }
.path { flex: 1; display: flex; align-items: center; height: 17px; margin-left: 1px; background: #fff; border-radius: 3px; padding-left: 5px; gap: 4px; }
.path svg { width: 18px; height: 16px; }
.combo { appearance: none; height: 17px; border: 1px solid #c4c4c4; border-radius: 3px; padding: 0 18px 0 9px; background: #fff url("data:image/svg+xml,%3Csvg xmlns='http://www.w3.org/2000/svg' width='14' height='17'%3E%3Cpath d='M0 0h14v17H0z' fill='%23188cff'/%3E%3Cpath d='M4 7l3-3 3 3M4 10l3 3 3-3' fill='none' stroke='white' stroke-width='1.500'/%3E%3C/svg%3E") right center no-repeat; }
.path .combo { flex: 1; border-width: 0; padding-left: 0; background-color: transparent; }
.lib-main { flex: 1; display: flex; margin: 0 3px; }
.query { flex: none; width: 315px; display: flex; flex-direction: column; border-left: 1px solid #999; padding: 2px 0 0 1px; }
.lists { display: grid; grid-template-columns: 96px 1fr; gap: 1px; border-bottom: 1px solid #f5f5f5; padding: 0 1px 1px 0; }
.list { display: flex; flex-direction: column; min-width: 0; }
.list select { appearance: none; height: 116px; background: #fff; border: 1px solid #999; overflow: hidden; padding: 1px 0; font: 10px/14px "Noto Sans", sans-serif; }
.list option { padding: 0 2px; height: 14px; min-height: 14px; line-height: 14px; }
.fields { padding-right: 2px; }
.field { display: flex; align-items: center; height: 24px; gap: 5px; }
.field.tight { height: 23px; }
.field label { width: 95px; text-align: right; white-space: nowrap; flex: none; }
.field input, .field select { flex: 1; min-width: 0; }
.field select { margin: 0 1px; }
.field input, .sqlrow input { height: 16px; background: #fff; border: 1px solid #ddd; border-top-color: #c2c2c2; }
.pick { width: 16px; height: 16px; background: #fff; border: 1px solid #c4c4c4; border-radius: 4px; }
.pick::before { content: ""; border: 3px solid transparent; border-top: 4px solid #111; border-bottom: 0; }
.box { min-width: 0; margin: 0 3px 0 3px; padding: 0; border: 1px solid #aaa; }
.box legend { padding: 0 2px; margin-left: 2px; line-height: 15px; }
.sql { padding: 4px 4px 3px 2px; margin-top: 1px; }
.sqlrow { display: flex; align-items: center; gap: 9px; padding: 0 3px 6px 4px; }
.sqlrow .combo { width: 119px; }
.sqlrow input { width: 104px; min-width: 0; }
.sqlrow button { flex: 1; height: 17px; background: #fff; border: 1px solid #c4c4c4; border-radius: 3px; }
.sql textarea { display: block; width: 238px; height: 56px; background: #fff; border: 1px solid #333; resize: none; }
.overlap { display: flex; align-items: center; height: 32px; padding-left: 40px; gap: 13px; }
.overlap label, .ranges label { display: flex; align-items: center; gap: 4px; }
input[type="radio"] { appearance: none; width: 14px; height: 14px; border-radius: 50%; background: #fff; border: 1px solid #ccc; }
input[type="radio"]:checked { border: 5px solid #168dfd; }
.details { flex: 1; border-bottom: 0; }
.info { background: #eee; height: 100%; padding-left: 1px; line-height: 13px; white-space: nowrap; overflow: hidden; }
.results { flex: 1; min-width: 0; display: flex; flex-direction: column; margin-left: 2px; border: 1px solid #999; border-top-width: 2px; }
.tablewrap { flex: 1; background: #fff; padding: 0 1px 0 1px; }
table { width: 100%; border-collapse: collapse; table-layout: fixed; font: 10px/12px "Noto Sans", sans-serif; }
th { height: 15px; padding: 0 2px; font-weight: 400; text-align: left; background: #f5f5f5; border-right: 1px solid #ddd; }
td { height: 56px; padding: 0; background: #0048d8; color: #fff; border-right: 1px solid #dce6ff; }
td.c-id { text-align: center; }
.c-id { width: 29px; } .c-look { width: 126px; }
td.c-look { text-align: center; color: #07101c; font-size: 11px; border-right: 0; }
.props div { height: 52px; padding-left: 3px; overflow: hidden; font-size: 11px; white-space: nowrap; }
.split { position: relative; display: flex; align-items: center; gap: 3px; height: 9px; padding-left: 2px; background: #fff; border-top: 1px solid #ccc; }
.split i { width: 6px; height: 5px; background: #666; }
.up { clip-path: polygon(50% 0, 100% 100%, 0 100%); }
.dn { clip-path: polygon(0 0, 100% 0, 50% 100%); }
.split b { position: absolute; left: 50%; margin-left: -2px; width: 5px; height: 5px; border: 1px solid #999; border-radius: 50%; background: #ddd; }
.mappane { position: relative; display: flex; justify-content: center; height: 151px; padding-bottom: 3px; }
.map { width: 297px; height: 148px; }
.maptools { position: absolute; top: 4px; right: 4px; display: flex; gap: 1px; padding: 2px; border: 1px solid #c2c2c2; border-radius: 4px; }
.maptools button { width: 21px; height: 21px; border: 1px solid #bbb; border-radius: 2px; }
.maptools svg { width: 18px; height: 18px; }
.actions { flex: none; width: 41px; display: flex; flex-direction: column; align-items: center; gap: 2px; padding: 3px 0 3px 3px; border-right: 1px solid #999; }
.actions svg { width: 20px; height: 20px; }
.gap { height: 18px; }
.wide-split { margin: 0 3px; border-top: 0; height: 8px; }
.timeline { display: flex; height: 40px; margin: 0 3px; padding-left: 6px; border-bottom: 1px solid #999; }
.ranges { display: flex; flex-direction: column; gap: 4px; padding-top: 3px; width: 68px; }
.tick { width: 1px; height: 13px; margin-top: 18px; background: #555; }
.chart { position: relative; flex: 1; display: flex; align-items: flex-end; justify-content: center; padding-right: 10px; }
.mark { position: absolute; left: 56.4%; top: 2px; width: 2px; height: 25px; background: linear-gradient(#1685e6, #043868); }
.desktop { height: 6px; background: linear-gradient(90deg, #ddd 11%, #454c55 11%, #444d62 25%, #64738a 38%, #c7d0d5 49%, #ddd 53%, #8799ad 62%, #3e485e 74%, #171823 84%, #1c130b 93%, #111); }

/* Right rail and status bar */
.rail { flex: none; width: 21px; border-left: 1px solid #555; background: #d6d6d6; display: flex; flex-direction: column; gap: 13px; padding-top: 3px; }
.rail button { writing-mode: vertical-rl; gap: 4px; padding: 9px 0 4px; font: 10px/18px "Noto Sans", sans-serif; }
.rail svg { width: 12px; height: 12px; }
.rail .on { background: #6b6b6b; }
.status { display: flex; justify-content: flex-end; align-items: center; height: 18px; line-height: 17px; }
.status div { display: grid; align-items: center; padding-left: 9px; border-left: 1px solid #aaa; }
.s-xy { width: 101px; grid-template-columns: 26px 18px 25px 1fr; }
.status .s-geo { width: 168px; padding-left: 25px; grid-template-columns: 41px 19px 44px 1fr; }
.status .s-zoom { width: 137px; padding-left: 13px; grid-template-columns: 36px 18px 32px 1fr; }
```

FILE: terrain.js
```js
// Procedural greyscale satellite scene for the navigation preview.
const canvas = document.getElementById('terrain');
const ctx = canvas.getContext('2d');
const W = canvas.width, H = canvas.height;
const hash = (x, y) => { const s = Math.sin(x * 127.1 + y * 311.7) * 43758.5453; return s - Math.floor(s); };
function noise(x, y) {
  const i = Math.floor(x), j = Math.floor(y), u = x - i, v = y - j;
  const a = u * u * (3 - 2 * u), b = v * v * (3 - 2 * v);
  return (hash(i, j) * (1 - a) + hash(i + 1, j) * a) * (1 - b) + (hash(i, j + 1) * (1 - a) + hash(i + 1, j + 1) * a) * b;
}
const fbm = (x, y) => { let t = 0, k = .5; for (let o = 0; o < 4; o++) { t += k * noise(x, y); x = x * 2.1 + 7; y = y * 2.1 + 3; k *= .5; } return t; };
const blob = (x, y, cx, cy, rx, ry) => Math.exp(-(((x - cx) / rx) ** 2 + ((y - cy) / ry) ** 2));
const img = ctx.createImageData(W, H);
for (let y = 0; y < H; y++) for (let x = 0; x < W; x++) {
  const wx = x + 5 * noise(x / 6, y / 6) + 8 * noise(x / 30, y / 25), wy = y + 5 * noise(x / 6 + 9, y / 6);
  const grain = hash(x, y) - .5;
  let v = 156 - 72 * blob(x, y, 95, 15, 100, 50) - 105 * blob(x, y, 190, 110, 34, 62) - 75 * blob(x, y, 220, 175, 48, 50)
    - 50 * blob(x, y, 120, 85, 42, 45) - 45 * blob(x, y, 245, 265, 60, 50) + 18 * blob(x, y, 15, 105, 35, 40);
  const rough = .28 + .6 * blob(x, y, 225, 50, 90, 110) + .45 * blob(x, y, 100, 30, 120, 60) + .25 * blob(x, y, 240, 180, 60, 60);
  v += (fbm(wx / 4, wy / 3) - .47) * 240 * rough + (noise(x / 22, y / 16) - .5) * 34 + grain * 34;
  const snow = fbm(wx / 6 + 5, wy / 5) + .16 * blob(x, y, 240, 20, 48, 60) + .17 * blob(x, y, 240, 90, 22, 65) + .12 * blob(x, y, 232, 190, 16, 60);
  if (snow > .66) v += 140 * Math.min(1, (snow - .66) * 10);
  const edge = 182 + x * .82 + 34 * (noise(x / 7, y / 7) - .5) + 12 * (hash(Math.floor(x / 3), Math.floor(y / 3)) - .5);
  if (y > edge && x < 172) {
    const s = x < 35 ? 2 : 3;
    const c = hash(Math.floor(x / s), Math.floor(y / s));
    const big = hash(Math.floor(x / 7) + 3, Math.floor(y / 5));
    v = big > .82 ? 175 + grain * 45 : big < .1 ? 60 + grain * 40 : 30 + c * 165 + grain * 60;
    if (c > .88) v = 235;
    if (x > 85 && big > .35 && y < 300) v = 165 + grain * 50;
  }
  v = Math.max(5, Math.min(255, v));
  const p = (y * W + x) * 4;
  img.data[p] = img.data[p + 1] = img.data[p + 2] = v;
  img.data[p + 3] = 255;
}
ctx.putImageData(img, 0, 0);

// Reservoirs and rivers, dabbed along each line: [width, x, y, x, y, ...]
ctx.fillStyle = '#060606';
[[4, 0, 34, 9, 36, 13, 42, 6, 51, 7, 57, 14, 67], [6, 0, 56, 8, 60], [1, 1, 12, 9, 19, 17, 18, 21, 12],
 [4, 28, 79, 34, 88, 36, 98, 39, 101], [1, 36, 98, 46, 103], [2, 30, 78, 42, 73, 43, 67, 47, 74], [1, 47, 74, 58, 80, 72, 96],
 [2, 0, 119, 16, 121, 26, 118, 30, 103], [6, 102, 215, 104, 209], [1, 103, 213, 107, 209],
 [3, 125, 251, 126, 246], [1, 126, 246, 130, 242], [6, 165, 289, 177, 286], [2, 158, 293, 170, 288, 182, 278, 188, 275, 190, 280, 197, 271], [1, 197, 271, 206, 270],
 [2, 204, 187, 216, 198], [5, 252, 44, 253, 56]].forEach(l => {
  for (let i = 1; i + 3 < l.length; i += 2) {
    const dx = l[i + 2] - l[i], dy = l[i + 3] - l[i + 1], n = Math.ceil(Math.hypot(dx, dy) * 2);
    for (let k = 0; k <= n; k++) {
      const x = l[i] + dx * k / n, y = l[i + 1] + dy * k / n;
      const w = Math.max(1, l[0] * (.4 + hash(x, y) * .7)), j = (hash(y, x) - .5) * l[0];
      ctx.fillRect(Math.round(x + j - w / 2), Math.round(y - j / 2 - w / 2), Math.round(w), Math.round(w));
    }
  }
});
```
